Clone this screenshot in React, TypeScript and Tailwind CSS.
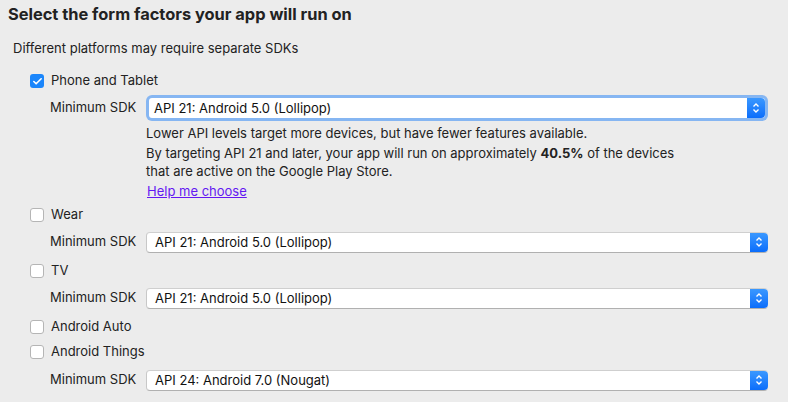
import { Check } from "lucide-react";

const font = { fontFamily: 'Inter, "Liberation Sans", Arial, sans-serif' };

const Checkbox = ({ checked, label, h = 26 }: { checked?: boolean; label: string; h?: number }) => (
    <div className="flex items-center pl-[30px]" style={{ height: h }}>
        {checked ? (
            <div className="w-[14px] h-[14px] rounded-[3px] bg-[#1b86fb] flex items-center justify-center">
                <Check size={11} strokeWidth={3.5} className="text-white" />
            </div>
        ) : (
            <div className="w-[14px] h-[14px] rounded-[3px] bg-white border border-[#b5b5b5]" />
        )}
        <span className="ml-[7px] text-[13px] text-[#222]">{label}</span>
    </div>
);

const Stepper = () => (
    <div className="w-[18px] self-stretch rounded-r-[4px] bg-gradient-to-b from-[#3a98ff] to-[#0a6dfb] flex items-center justify-center">
        <svg width="8" height="12" viewBox="0 0 8 12" fill="none" stroke="white" strokeWidth="1.4">
            <path d="M1.5 4.5 L4 2 L6.5 4.5" />
            <path d="M1.5 7.5 L4 10 L6.5 7.5" />
        </svg>
    </div>
);

const SdkRow = ({ value, focused }: { value: string; focused?: boolean }) => (
    <div className="flex items-center pl-[50px] h-[28px]">
        <span className="w-[96px] text-[13px] text-[#222]">Minimum SDK</span>
        {focused ? (
            <div className="w-[622px] rounded-[6px] p-[3px] bg-[#86b6f2]">
                <div className="flex h-[20px] bg-white rounded-[3px]">
                    <span className="flex-1 pl-[5px] text-[13px] leading-[20px] text-[#111]">{value}</span>
                    <Stepper />
                </div>
            </div>
        ) : (
            <div className="flex w-[622px] h-[21px] bg-white rounded-[4px] border-t border-[#cfcfcf] border-b border-b-[#b0b0b0] border-l border-l-[#c8c8c8]">
                <span className="flex-1 pl-[8px] text-[13px] leading-[19px] text-[#111]">{value}</span>
                <Stepper />
            </div>
        )}
    </div>
);

export default function App() {
    return (
        <div className="w-[788px] h-[402px] bg-[#ececec] overflow-hidden" style={font}>
            <h1 className="pl-[8px] h-[28px] text-[16.4px] font-bold text-[#222] leading-[28px]">
                Select the form factors your app will run on
            </h1>
            <p className="pl-[13px] mt-[9px] h-[22px] text-[13px] text-[#222] leading-[22px]">Different platforms may require separate SDKs</p>
            <div className="pt-[9px]">
                <Checkbox checked label="Phone and Tablet" />
                <SdkRow value="API 21: Android 5.0 (Lollipop)" focused />
                <div className="pl-[146px] text-[13px] text-[#222]">
                    <p className="leading-[20px] mt-[1px]">Lower API levels target more devices, but have fewer features available.</p>
                    <p className="leading-[18px] mt-[1px]">
                        By targeting API 21 and later, your app will run on approximately <b>40.5%</b> of the devices
                        <br />
                        that are active on the Google Play Store.
                    </p>
                    <p className="leading-[20px] mt-[1px]">
                        <span className="underline text-[#6418f2] pl-[1px]">Help me choose</span>
                    </p>
                </div>
                <div className="mt-[1px]">
                    <Checkbox label="Wear" />
                </div>
                <SdkRow value="API 21: Android 5.0 (Lollipop)" />
                <div className="mt-[2px]">
                    <Checkbox label="TV" />
                </div>
                <SdkRow value="API 21: Android 5.0 (Lollipop)" />
                <div className="mt-[2px]">
                    <Checkbox label="Android Auto" h={25} />
                </div>
                <Checkbox label="Android Things" />
                <div className="mt-[1px]">
                    <SdkRow value="API 24: Android 7.0 (Nougat)" />
                </div>
            </div>
        </div>
    );
}
